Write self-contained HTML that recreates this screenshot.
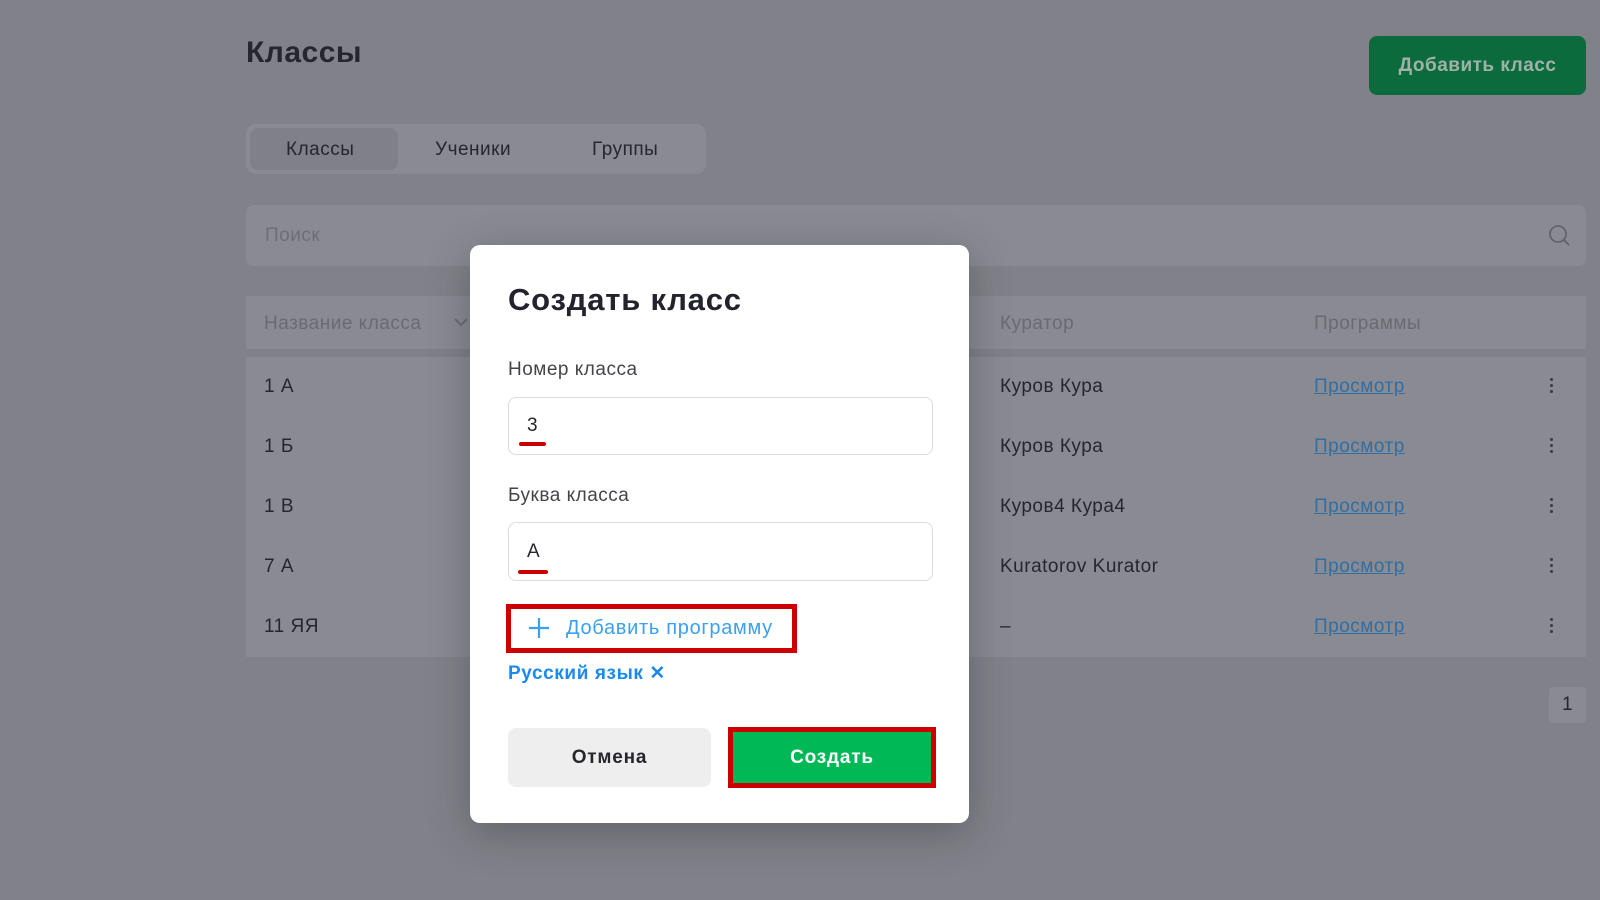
<!DOCTYPE html>
<html><head><meta charset="utf-8"><style>
*{box-sizing:border-box;margin:0;padding:0}
body{width:1600px;height:900px;background:#818189;font-family:"Liberation Sans",sans-serif;position:relative;overflow:hidden;color:#25262e;letter-spacing:0.5px}
.a{position:absolute}
.t{white-space:nowrap}
.panel{background:#898a92;border-radius:8px}
.row{position:absolute;left:246px;width:1340px;height:60px;background:#898a92;font-size:19px}
.row span{position:absolute;top:50%;transform:translateY(-50%)}
.lnk{color:#2f6fa6;text-decoration:underline}
.dots{width:4px}
.dots i{display:block;width:3px;height:3px;background:#3a3b42;border-radius:50%;margin:0 0 3px}
</style></head><body>
<div class="a t" style="left:246px;top:36px;font-size:30px;font-weight:bold;color:#25262e">Классы</div>
<div class="a" style="left:1369px;top:36px;width:217px;height:59px;background:#0c6b3d;border-radius:8px;color:#a0b2a8;font-size:19px;font-weight:bold;text-align:center;line-height:59px">Добавить класс</div>
<div class="a panel" style="left:246px;top:124px;width:460px;height:50px;border-radius:10px"></div>
<div class="a" style="left:250px;top:128px;width:148px;height:42px;background:#7f8088;border-radius:8px"></div>
<div class="a t" style="left:286px;top:139px;font-size:19px">Классы</div>
<div class="a t" style="left:435px;top:139px;font-size:19px">Ученики</div>
<div class="a t" style="left:592px;top:139px;font-size:19px">Группы</div>
<div class="a panel" style="left:246px;top:205px;width:1340px;height:61px"></div>
<div class="a t" style="left:265px;top:225px;font-size:19px;color:#6e6f76">Поиск</div>
<svg class="a" style="left:1548px;top:224px" width="24" height="24" viewBox="0 0 24 24"><circle cx="10" cy="10" r="8" fill="none" stroke="#5e5f66" stroke-width="1.6"/><path d="M16 16l5 5" stroke="#5e5f66" stroke-width="1.6"/></svg>
<div class="a" style="left:246px;top:296px;width:1340px;height:53px;background:#898a92"></div>
<div class="a t" style="left:264px;top:313px;font-size:19px;color:#6a6b72">Название класса</div>
<svg class="a" style="left:453px;top:316px" width="16" height="12" viewBox="0 0 16 12"><path d="M2 3l6 6 6-6" fill="none" stroke="#6a6b72" stroke-width="2"/></svg>
<div class="a t" style="left:1000px;top:313px;font-size:19px;color:#6a6b72">Куратор</div>
<div class="a t" style="left:1314px;top:313px;font-size:19px;color:#6a6b72">Программы</div>
<div class="a" style="left:246px;top:349px;width:1340px;height:8px;background:#7f8088"></div>
<div class="row" style="top:357px"><span style="left:18px">1 А</span><span style="left:754px">Куров Кура</span><span class="lnk" style="left:1068px">Просмотр</span><span class="dots" style="left:1304px"><i></i><i></i><i></i></span></div>
<div class="row" style="top:417px"><span style="left:18px">1 Б</span><span style="left:754px">Куров Кура</span><span class="lnk" style="left:1068px">Просмотр</span><span class="dots" style="left:1304px"><i></i><i></i><i></i></span></div>
<div class="row" style="top:477px"><span style="left:18px">1 В</span><span style="left:754px">Куров4 Кура4</span><span class="lnk" style="left:1068px">Просмотр</span><span class="dots" style="left:1304px"><i></i><i></i><i></i></span></div>
<div class="row" style="top:537px"><span style="left:18px">7 А</span><span style="left:754px">Kuratorov Kurator</span><span class="lnk" style="left:1068px">Просмотр</span><span class="dots" style="left:1304px"><i></i><i></i><i></i></span></div>
<div class="row" style="top:597px"><span style="left:18px">11 ЯЯ</span><span style="left:754px">–</span><span class="lnk" style="left:1068px">Просмотр</span><span class="dots" style="left:1304px"><i></i><i></i><i></i></span></div>
<div class="a" style="left:1549px;top:687px;width:37px;height:36px;background:#898a92;border-radius:4px;font-size:19px;text-align:center;line-height:36px">1</div>

<div class="a" style="left:470px;top:245px;width:499px;height:578px;background:#fff;border-radius:10px;box-shadow:0 10px 40px rgba(40,40,50,.35)">
  <div class="a t" style="left:38px;top:37px;font-size:31px;font-weight:bold;color:#22232c;letter-spacing:0.8px">Создать класс</div>
  <div class="a t" style="left:38px;top:114px;font-size:19px;color:#44454c">Номер класса</div>
  <div class="a" style="left:38px;top:152px;width:425px;height:58px;border:1px solid #dcdcdf;border-radius:8px"></div>
  <div class="a t" style="left:57px;top:170px;font-size:19px">3</div>
  <div class="a" style="left:49px;top:197px;width:27px;height:4px;background:#cc0000;border-radius:2px"></div>
  <div class="a t" style="left:38px;top:240px;font-size:19px;color:#44454c">Буква класса</div>
  <div class="a" style="left:38px;top:277px;width:425px;height:59px;border:1px solid #dcdcdf;border-radius:8px"></div>
  <div class="a t" style="left:57px;top:296px;font-size:19px">А</div>
  <div class="a" style="left:48px;top:325px;width:30px;height:4px;background:#cc0000;border-radius:2px"></div>
  <div class="a" style="left:36px;top:359px;width:291px;height:49px;border:5px solid #cc0000"></div>
  <svg class="a" style="left:58px;top:372px" width="22" height="22" viewBox="0 0 22 22"><path d="M11 1v20M1 11h20" stroke="#3aa0f0" stroke-width="2.2"/></svg>
  <div class="a t" style="left:96px;top:372px;font-size:20px;color:#3aa0f0;letter-spacing:0.7px">Добавить программу</div>
  <div class="a t" style="left:38px;top:417px;font-size:19px;font-weight:bold;color:#1a8af0;letter-spacing:0.6px">Русский язык ✕</div>
  <div class="a" style="left:38px;top:483px;width:203px;height:59px;background:#eeeeee;border-radius:8px;font-size:19px;font-weight:bold;text-align:center;line-height:59px;letter-spacing:0.8px">Отмена</div>
  <div class="a" style="left:258px;top:482px;width:208px;height:61px;border:5px solid #cc0000;background:#00b856;color:#fff;font-size:19px;font-weight:bold;text-align:center;line-height:51px;letter-spacing:0.8px">Создать</div>
</div>
</body></html>
